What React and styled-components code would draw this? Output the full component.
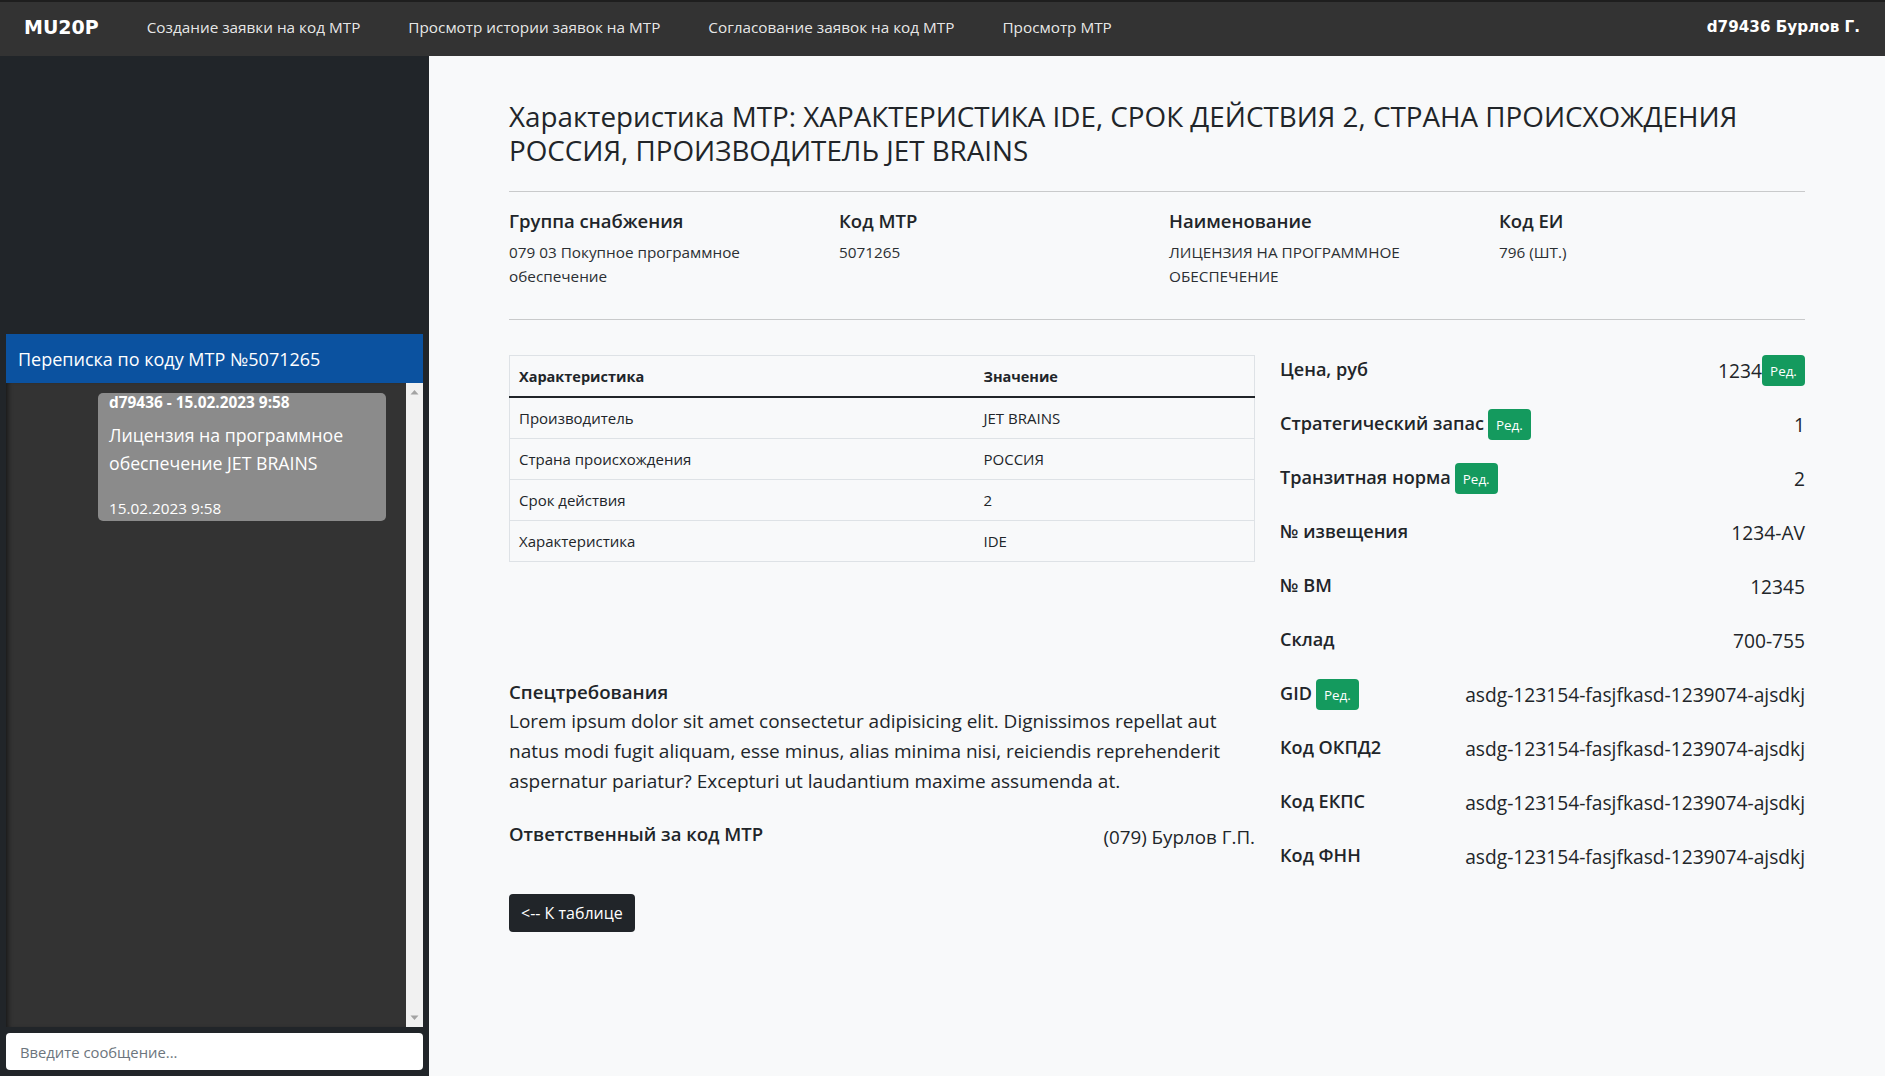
import React from "react";
import styled, { createGlobalStyle } from "styled-components";

const GlobalStyle = createGlobalStyle`
  html, body { margin: 0; padding: 0; }
  body {
    font-family: "Open Sans", "Noto Sans", sans-serif;
    color: #212529;
    background: #f8f9fa;
  }
  * { box-sizing: border-box; }
`;

const Page = styled.div`
  display: grid;
  grid-template-rows: 56px 1fr;
  height: 1076px;
  overflow: hidden;
`;

const Navbar = styled.nav`
  display: flex;
  align-items: center;
  gap: 48px;
  background: #333333;
  border-top: 2px solid #1e1e1e;
  padding: 0 25px 4px 24px;
`;

const Brand = styled.span`
  font-family: "DejaVu Sans", sans-serif;
  font-weight: 700;
  font-size: 19px;
  color: #ffffff;
`;

const NavLink = styled.a`
  color: rgba(255, 255, 255, 0.9);
  font-size: 15.3px;
  text-decoration: none;
`;

const UserName = styled.span`
  margin-left: auto;
  font-family: "DejaVu Sans", sans-serif;
  font-weight: 700;
  font-size: 15.2px;
  color: #ffffff;
`;

const Body = styled.div`
  display: grid;
  grid-template-columns: 429px 1fr;
  min-height: 0;
`;

const Sidebar = styled.aside`
  display: flex;
  flex-direction: column;
  background: #212529;
  padding: 278px 6px 6px 6px;
  min-height: 0;
`;

const ChatHeader = styled.div`
  height: 49px;
  display: flex;
  align-items: center;
  padding-left: 12px;
  background: #0b52a0;
  color: #ffffff;
  font-size: 18px;
`;

const ChatBody = styled.div`
  flex: 1;
  display: flex;
  min-height: 0;
  background: #333333;
`;

const Messages = styled.div`
  flex: 1;
  padding: 10px 0 0 92px;
  box-shadow: inset 5px 0 5px -3px rgba(0, 0, 0, 0.55);
`;

const Bubble = styled.div`
  width: 288px;
  background: #8b8b8b;
  border-radius: 5px;
  padding: 0 11px 1px;
  color: #ffffff;
`;

const BubbleHead = styled.div`
  font-weight: 700;
  font-size: 15.4px;
  line-height: 20px;
`;

const BubbleText = styled.div`
  margin-top: 8px;
  font-size: 17.7px;
  line-height: 28px;
`;

const BubbleDate = styled.div`
  margin-top: 19px;
  font-size: 15.3px;
  line-height: 24px;
`;

const ScrollTrack = styled.div`
  width: 17px;
  background: #f1f1f1;
  display: flex;
  flex-direction: column;
  justify-content: space-between;
  align-items: center;
  padding: 6px 0;
`;

const MessageInput = styled.input`
  margin-top: 6px;
  height: 37px;
  border: 0;
  border-radius: 4px;
  background: #ffffff;
  padding: 0 14px;
  font-family: inherit;
  font-size: 14.8px;
  color: #212529;
  outline: none;
  &::placeholder { color: #6c757d; }
`;

const Main = styled.main`
  padding: 43px 80px 0;
  background: #f8f9fa;
  min-width: 0;
`;

const Title = styled.h3`
  margin: 0;
  font-size: 27.8px;
  font-weight: 500;
  line-height: 34px;
  color: #212529;
`;

const Divider = styled.hr`
  border: 0;
  border-top: 1px solid #c9cacb;
  margin: ${(p) => p.$top}px 0 0;
`;

const InfoGrid = styled.div`
  display: grid;
  grid-template-columns: repeat(4, 1fr);
  column-gap: 24px;
  margin-top: 17px;
`;

const InfoLabel = styled.div`
  font-size: 18.5px;
  font-weight: 600;
  line-height: 23px;
`;

const InfoValue = styled.div`
  margin-top: 8px;
  font-size: 15.3px;
  line-height: 24px;
  color: #2b2f33;
`;

const Details = styled.div`
  display: grid;
  grid-template-columns: 746px 1fr;
  column-gap: 25px;
  margin-top: 35px;
  align-items: start;
`;

const LeftCol = styled.div`
  display: flex;
  flex-direction: column;
  align-items: flex-start;
`;

const Table = styled.table`
  width: 100%;
  border-collapse: collapse;
  border: 1px solid #dee2e6;
  font-size: 15px;
`;

const Th = styled.th`
  text-align: left;
  font-weight: 700;
  font-size: 14.5px;
  padding: 10px 9px 8px;
  line-height: 22px;
  border-bottom: 2px solid #212529;
  width: ${(p) => p.$w || "auto"};
`;

const Td = styled.td`
  padding: 8px 9px;
  line-height: 24px;
  border-bottom: 1px solid #dee2e6;
`;

const SpecTitle = styled.div`
  margin-top: 118px;
  font-size: 18.7px;
  font-weight: 600;
  line-height: 24px;
`;

const SpecText = styled.p`
  margin: 2px 0 0;
  font-size: 19px;
  line-height: 30px;
`;

const Responsible = styled.div`
  align-self: stretch;
  display: flex;
  justify-content: space-between;
  align-items: flex-end;
  margin-top: 26px;
`;

const StrongLabel = styled.span`
  font-size: ${(p) => p.$size || 18.1}px;
  font-weight: 600;
  line-height: 24px;
  padding-bottom: 3px;
`;

const PlainValue = styled.span`
  font-size: ${(p) => p.$size || 19.2}px;
  line-height: 24px;
`;

const BackButton = styled.button`
  margin-top: 45px;
  height: 38px;
  padding: 0 12px;
  border: 0;
  border-radius: 4px;
  background: #212529;
  color: #ffffff;
  font-family: inherit;
  font-size: 16px;
`;

const RightCol = styled.div`
  display: flex;
  flex-direction: column;
`;

const PropRow = styled.div`
  display: flex;
  align-items: center;
  justify-content: space-between;
  height: 31px;
  margin-bottom: 23px;
`;

const Group = styled.span`
  display: flex;
  align-items: center;
`;

const EditButton = styled.button`
  height: 31px;
  width: 43px;
  padding: 0;
  margin-left: ${(p) => (p.$flush ? 0 : 4)}px;
  border: 0;
  border-radius: 4px;
  background: #149a5e;
  color: #ffffff;
  font-family: inherit;
  font-size: 13.4px;
`;

const Arrow = ({ up }) => (
  <svg width="9" height="6" viewBox="0 0 9 6">
    <path d={up ? "M0.5 5.5 L4.5 1 L8.5 5.5 Z" : "M0.5 0.5 L4.5 5 L8.5 0.5 Z"} fill="#a3a3a3" />
  </svg>
);

const info = [
  { label: "Группа снабжения", value: "079 03 Покупное программное обеспечение" },
  { label: "Код МТР", value: "5071265" },
  { label: "Наименование", value: "ЛИЦЕНЗИЯ НА ПРОГРАММНОЕ ОБЕСПЕЧЕНИЕ" },
  { label: "Код ЕИ", value: "796 (ШТ.)" },
];

const rows = [
  ["Производитель", "JET BRAINS"],
  ["Страна происхождения", "РОССИЯ"],
  ["Срок действия", "2"],
  ["Характеристика", "IDE"],
];

const props = [
  { label: "Цена, руб", value: "1234", edit: "value" },
  { label: "Стратегический запас", value: "1", edit: "label" },
  { label: "Транзитная норма", value: "2", edit: "label" },
  { label: "№ извещения", value: "1234-AV" },
  { label: "№ ВМ", value: "12345" },
  { label: "Склад", value: "700-755" },
  { label: "GID", value: "asdg-123154-fasjfkasd-1239074-ajsdkj", edit: "label" },
  { label: "Код ОКПД2", value: "asdg-123154-fasjfkasd-1239074-ajsdkj" },
  { label: "Код ЕКПС", value: "asdg-123154-fasjfkasd-1239074-ajsdkj" },
  { label: "Код ФНН", value: "asdg-123154-fasjfkasd-1239074-ajsdkj" },
];

export default function App() {
  return (
    <>
      <GlobalStyle />
      <Page>
        <Navbar>
          <Brand>MU20P</Brand>
          <NavLink href="#">Создание заявки на код МТР</NavLink>
          <NavLink href="#">Просмотр истории заявок на МТР</NavLink>
          <NavLink href="#">Согласование заявок на код МТР</NavLink>
          <NavLink href="#">Просмотр МТР</NavLink>
          <UserName>d79436 Бурлов Г.</UserName>
        </Navbar>
        <Body>
          <Sidebar>
            <ChatHeader>Переписка по коду МТР №5071265</ChatHeader>
            <ChatBody>
              <Messages>
                <Bubble>
                  <BubbleHead>d79436 - 15.02.2023 9:58</BubbleHead>
                  <BubbleText>Лицензия на программное обеспечение JET BRAINS</BubbleText>
                  <BubbleDate>15.02.2023 9:58</BubbleDate>
                </Bubble>
              </Messages>
              <ScrollTrack>
                <Arrow up />
                <Arrow />
              </ScrollTrack>
            </ChatBody>
            <MessageInput placeholder="Введите сообщение..." />
          </Sidebar>
          <Main>
            <Title>
              Характеристика МТР: ХАРАКТЕРИСТИКА IDE, СРОК ДЕЙСТВИЯ 2, СТРАНА ПРОИСХОЖДЕНИЯ РОССИЯ,
              ПРОИЗВОДИТЕЛЬ JET BRAINS
            </Title>
            <Divider $top={24} />
            <InfoGrid>
              {info.map((i) => (
                <div key={i.label}>
                  <InfoLabel>{i.label}</InfoLabel>
                  <InfoValue>{i.value}</InfoValue>
                </div>
              ))}
            </InfoGrid>
            <Divider $top={31} />
            <Details>
              <LeftCol>
                <Table>
                  <thead>
                    <tr>
                      <Th $w="465px">Характеристика</Th>
                      <Th>Значение</Th>
                    </tr>
                  </thead>
                  <tbody>
                    {rows.map(([k, v]) => (
                      <tr key={k}>
                        <Td>{k}</Td>
                        <Td>{v}</Td>
                      </tr>
                    ))}
                  </tbody>
                </Table>
                <SpecTitle>Спецтребования</SpecTitle>
                <SpecText>
                  Lorem ipsum dolor sit amet consectetur adipisicing elit. Dignissimos repellat aut natus
                  modi fugit aliquam, esse minus, alias minima nisi, reiciendis reprehenderit aspernatur
                  pariatur? Excepturi ut laudantium maxime assumenda at.
                </SpecText>
                <Responsible>
                  <StrongLabel $size={18.5}>Ответственный за код МТР</StrongLabel>
                  <PlainValue $size={18.8}>(079) Бурлов Г.П.</PlainValue>
                </Responsible>
                <BackButton>&lt;-- К таблице</BackButton>
              </LeftCol>
              <RightCol>
                {props.map((p) => (
                  <PropRow key={p.label}>
                    <Group>
                      <StrongLabel>{p.label}</StrongLabel>
                      {p.edit === "label" && <EditButton>Ред.</EditButton>}
                    </Group>
                    <Group>
                      <PlainValue>{p.value}</PlainValue>
                      {p.edit === "value" && <EditButton $flush>Ред.</EditButton>}
                    </Group>
                  </PropRow>
                ))}
              </RightCol>
            </Details>
          </Main>
        </Body>
      </Page>
    </>
  );
}
